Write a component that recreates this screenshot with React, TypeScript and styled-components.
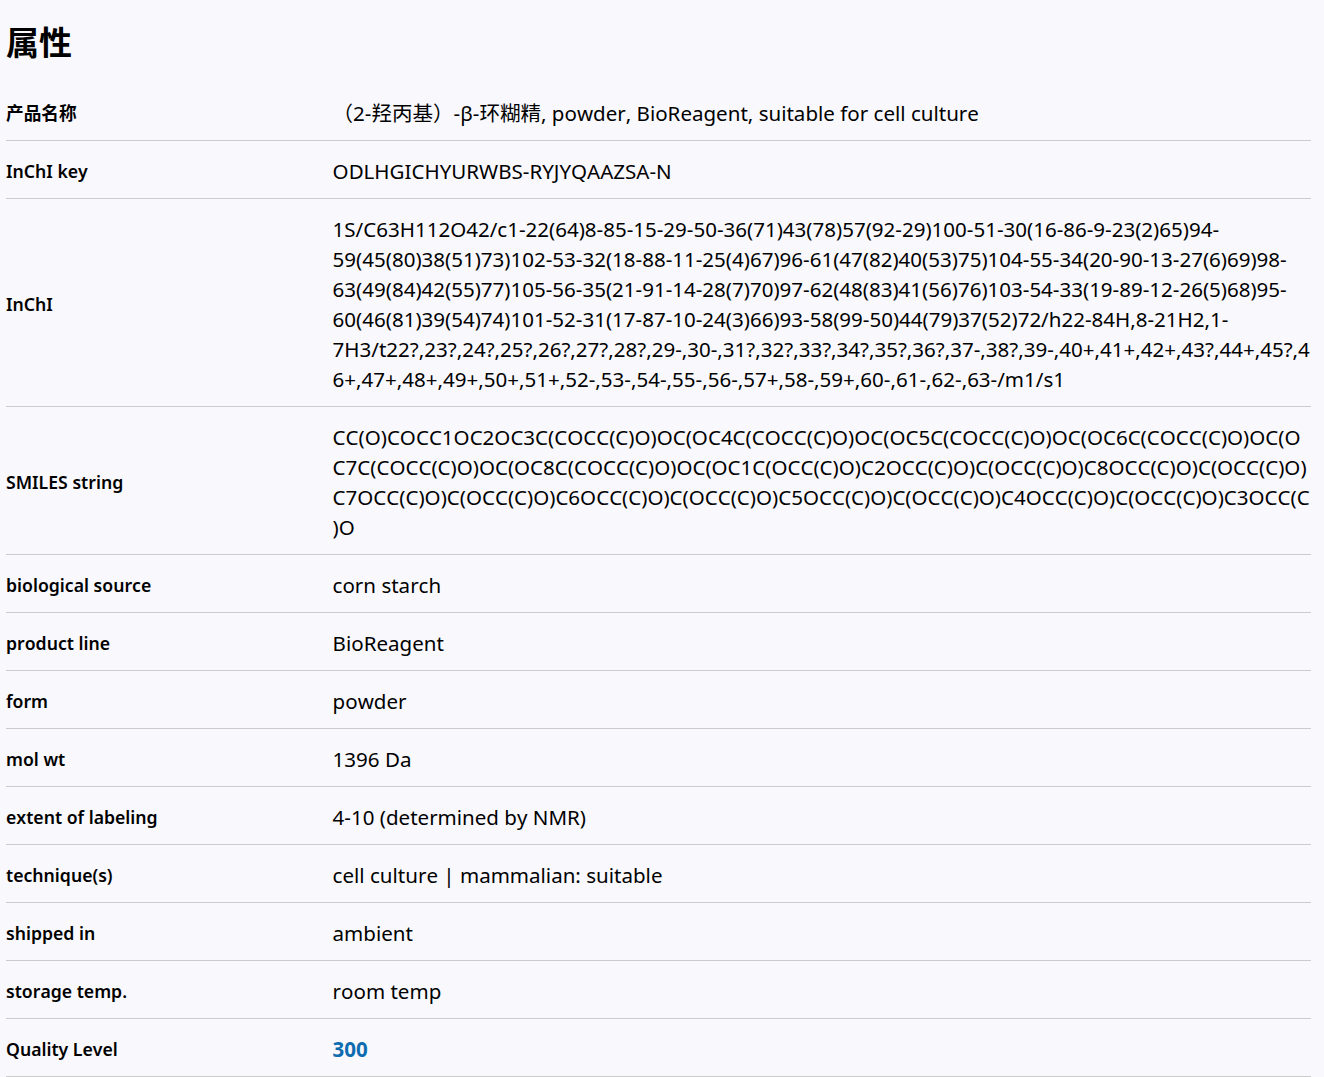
import React from "react";
import styled, { createGlobalStyle } from "styled-components";

const GlobalStyle = createGlobalStyle`
  html, body {
    margin: 0;
    padding: 0;
    background: #f9f9fd;
  }
  body {
    font-family: "Noto Sans", "Noto Sans CJK SC", sans-serif;
    font-kerning: none;
    color: #000;
  }
`;

const Page = styled.div`
  padding: 0 13px 0 6px;
`;

const Title = styled.h2`
  margin: 0;
  padding-top: 21px;
  height: 83px;
  box-sizing: border-box;
  font-size: 33px;
  line-height: 44px;
  font-weight: 700;
`;

const Row = styled.div`
  display: flex;
  align-items: center;
  padding: 15px 0 12px;
  border-bottom: 1px solid #ccc;
`;

const Label = styled.div`
  flex: 0 0 326.6px;
  font-size: 17.65px;
  line-height: 30px;
  font-weight: 600;
`;

const Value = styled.div<{ $link?: boolean }>`
  flex: 1;
  min-width: 0;
  font-size: 20.54px;
  line-height: 30px;
  overflow-wrap: anywhere;
  font-weight: ${(p) => (p.$link ? 700 : 400)};
  color: ${(p) => (p.$link ? "#0f6cb0" : "inherit")};
`;

const rows: { label: string; value: string; link?: boolean }[] = [
  { label: "产品名称", value: "（2-羟丙基）-β-环糊精, powder, BioReagent, suitable for cell culture" },
  { label: "InChI key", value: "ODLHGICHYURWBS-RYJYQAAZSA-N" },
  {
    label: "InChI",
    value:
      "1S/C63H112O42/c1-22(64)8-85-15-29-50-36(71)43(78)57(92-29)100-51-30(16-86-9-23(2)65)94-59(45(80)38(51)73)102-53-32(18-88-11-25(4)67)96-61(47(82)40(53)75)104-55-34(20-90-13-27(6)69)98-63(49(84)42(55)77)105-56-35(21-91-14-28(7)70)97-62(48(83)41(56)76)103-54-33(19-89-12-26(5)68)95-60(46(81)39(54)74)101-52-31(17-87-10-24(3)66)93-58(99-50)44(79)37(52)72/h22-84H,8-21H2,1-7H3/t22?,23?,24?,25?,26?,27?,28?,29-,30-,31?,32?,33?,34?,35?,36?,37-,38?,39-,40+,41+,42+,43?,44+,45?,46+,47+,48+,49+,50+,51+,52-,53-,54-,55-,56-,57+,58-,59+,60-,61-,62-,63-/m1/s1",
  },
  {
    label: "SMILES string",
    value:
      "CC(O)COCC1OC2OC3C(COCC(C)O)OC(OC4C(COCC(C)O)OC(OC5C(COCC(C)O)OC(OC6C(COCC(C)O)OC(OC7C(COCC(C)O)OC(OC8C(COCC(C)O)OC(OC1C(OCC(C)O)C2OCC(C)O)C(OCC(C)O)C8OCC(C)O)C(OCC(C)O)C7OCC(C)O)C(OCC(C)O)C6OCC(C)O)C(OCC(C)O)C5OCC(C)O)C(OCC(C)O)C4OCC(C)O)C(OCC(C)O)C3OCC(C)O",
  },
  { label: "biological source", value: "corn starch" },
  { label: "product line", value: "BioReagent" },
  { label: "form", value: "powder" },
  { label: "mol wt", value: "1396 Da" },
  { label: "extent of labeling", value: "4-10 (determined by NMR)" },
  { label: "technique(s)", value: "cell culture | mammalian: suitable" },
  { label: "shipped in", value: "ambient" },
  { label: "storage temp.", value: "room temp" },
  { label: "Quality Level", value: "300", link: true },
];

export default function App() {
  return (
    <Page>
      <GlobalStyle />
      <Title>属性</Title>
      {rows.map((r) => (
        <Row key={r.label}>
          <Label>{r.label}</Label>
          <Value $link={r.link}>{r.value}</Value>
        </Row>
      ))}
    </Page>
  );
}
